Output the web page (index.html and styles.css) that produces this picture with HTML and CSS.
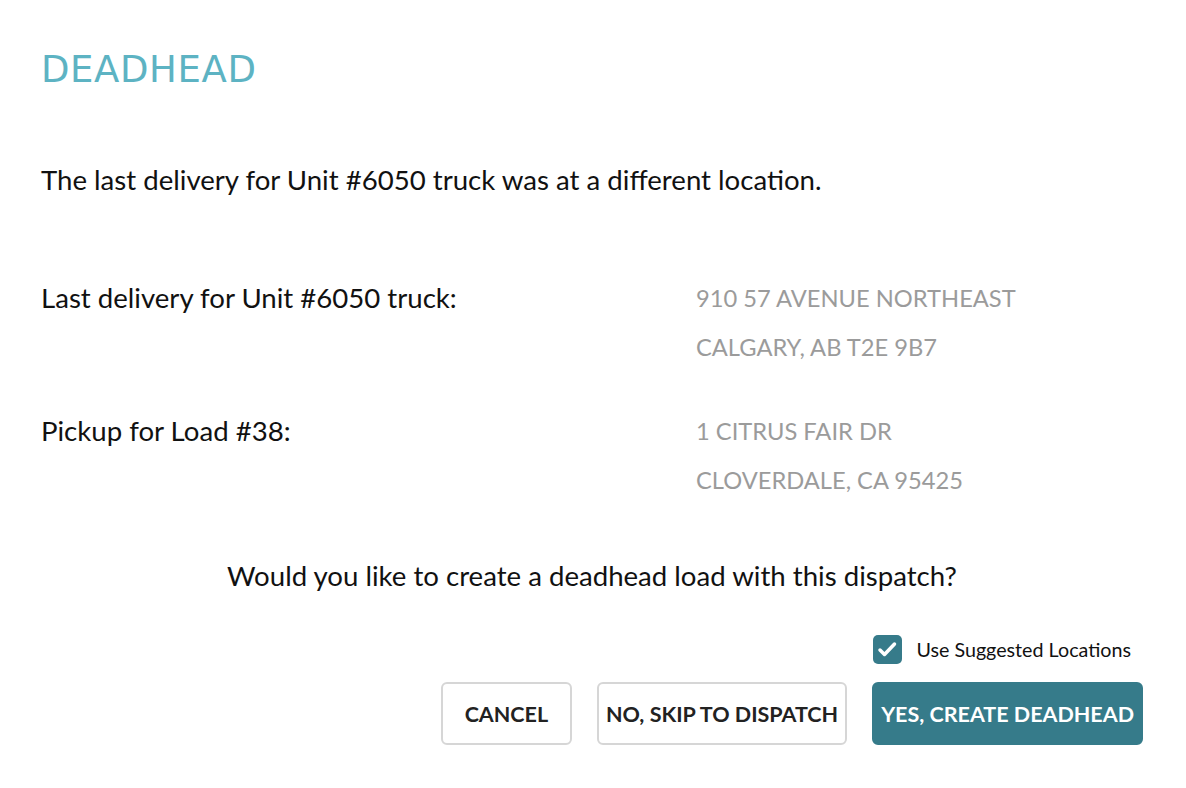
FILE: index.html
```html
<!DOCTYPE html>
<html lang="en">
<head>
    <meta charset="UTF-8">
    <meta name="viewport" content="width=device-width, initial-scale=1.0">
    <title>Deadhead</title>
    <link rel="stylesheet" href="styles.css">
</head>
<body>

<div class="modal">
    <h1 class="title">DEADHEAD</h1>

    <p class="intro">The last delivery for Unit #6050 truck was at a different location.</p>

    <div class="locations">
        <div class="location-row">
            <div class="location-label">Last delivery for Unit #6050 truck:</div>
            <div class="address">
                <div>910 57 AVENUE NORTHEAST</div>
                <div>CALGARY, AB T2E 9B7</div>
            </div>
        </div>
        <div class="location-row">
            <div class="location-label">Pickup for Load #38:</div>
            <div class="address">
                <div>1 CITRUS FAIR DR</div>
                <div>CLOVERDALE, CA 95425</div>
            </div>
        </div>
    </div>

    <p class="question">Would you like to create a deadhead load with this dispatch?</p>

    <label class="suggested">
        <span class="checkbox">
            <svg width="29" height="29" viewBox="0 0 29 29"><path d="M7 15l4.5 4.5 10-10.5" fill="none" stroke="#fff" stroke-width="3.5" stroke-linecap="round" stroke-linejoin="round"/></svg>
        </span>
        Use Suggested Locations
    </label>

    <div class="actions">
        <button class="btn btn-cancel">CANCEL</button>
        <button class="btn">NO, SKIP TO DISPATCH</button>
        <button class="btn btn-primary">YES, CREATE DEADHEAD</button>
    </div>
</div>

</body>
</html>
```

FILE: styles.css
```css
body {
    margin: 0;
    font-family: Lato, "Open Sans", sans-serif;
    background: #ffffff;
    color: #111111;
}
.modal {
    padding: 50px 43px 40px 41px;
}
.title {
    margin: 0;
    font-family: "DejaVu Sans", sans-serif;
    font-weight: normal;
    font-size: 37px;
    line-height: 40px;
    color: #5db3c3;
    letter-spacing: 0.6px;
}
.intro {
    margin: 73px 0 0;
    font-size: 27.6px;
    line-height: 34px;
}
.locations {
    display: flex;
    flex-direction: column;
    gap: 50px;
    margin-top: 84px;
}
.location-row {
    display: flex;
}
.location-label {
    width: 655px;
    font-size: 27.6px;
    line-height: 34px;
}
.address {
    display: flex;
    flex-direction: column;
    gap: 15px;
    font-size: 23.7px;
    line-height: 34px;
    color: #9b9b9b;
}
.question {
    margin: 62px 0 0;
    text-align: center;
    font-size: 27.6px;
    line-height: 34px;
}
.suggested {
    display: flex;
    align-items: center;
    justify-content: flex-end;
    gap: 14px;
    margin-top: 42px;
    margin-right: 12px;
    font-size: 19.7px;
    line-height: 29px;
}
.checkbox {
    display: flex;
    align-items: center;
    justify-content: center;
    width: 29px;
    height: 29px;
    border-radius: 5px;
    background: #367b8a;
}
.actions {
    display: flex;
    justify-content: flex-end;
    gap: 25px;
    margin-top: 18px;
}
.btn {
    height: 63px;
    padding: 0 7px;
    font-family: Lato, sans-serif;
    font-weight: bold;
    font-size: 21.5px;
    color: #222222;
    background: #ffffff;
    border: 2px solid #d6d6d6;
    border-radius: 6px;
}
.btn-cancel {
    width: 131px;
}
.btn-primary {
    background: #367b8a;
    border-color: #367b8a;
    color: #ffffff;
}
```
